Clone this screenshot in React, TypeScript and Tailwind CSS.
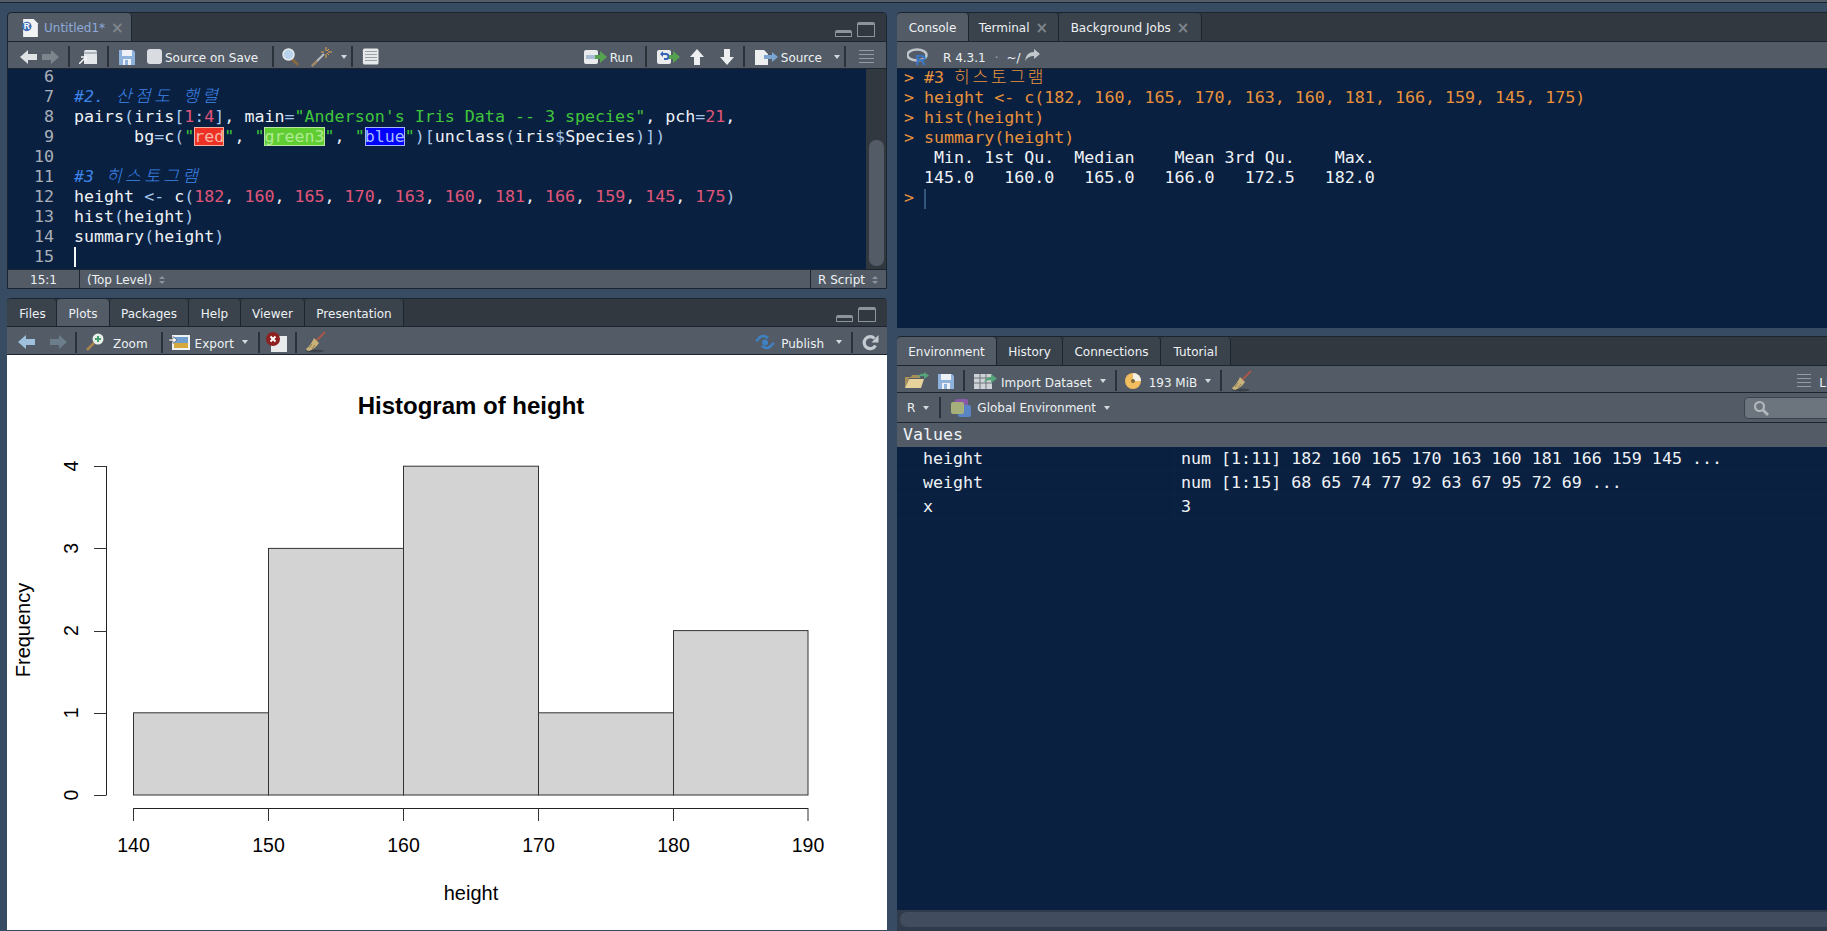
import type { ReactNode } from 'react'

const ui = "font-['DejaVu_Sans','Noto_Sans',sans-serif] text-[12px] text-[#eef1f4] whitespace-nowrap"
const mono = "font-['DejaVu_Sans_Mono','Noto_Sans_CJK_KR',monospace] text-[16.65px] leading-[20px] whitespace-pre [&>div]:h-[20px]"

// toolbar separator
function Sep({ className = '' }: { className?: string }) {
  return <div className={`w-[2px] h-[21px] shrink-0 bg-[#2b3138] ${className}`} />
}

function Caret({ className = '' }: { className?: string }) {
  return <div className={`w-0 h-0 shrink-0 border-x-[3.5px] border-x-transparent border-t-[4px] border-t-[#d5d9dd] ${className}`} />
}

function Arrow({ dir, color, className = '' }: { dir: 'l' | 'r' | 'u' | 'd'; color: string; className?: string }) {
  const pts = {
    l: '0,8 8,1 8,5 17,5 17,11 8,11 8,15',
    r: '17,8 9,1 9,5 0,5 0,11 9,11 9,15',
    u: '8,0 15,8 11,8 11,16 5,16 5,8 1,8',
    d: '8,16 15,8 11,8 11,0 5,0 5,8 1,8',
  }[dir]
  return (
    <svg width="17" height="16" viewBox="0 0 17 16" className={`shrink-0 ${className}`}>
      <polygon points={pts} fill={color} />
    </svg>
  )
}

function WindowButtons({ className = '' }: { className?: string }) {
  return (
    <div className={`flex items-end gap-[5px] ${className}`}>
      <div className="w-[17px] h-[7px] rounded-t-[2px] border border-[#8b939b] border-t-[3px] bg-[#32383f]" />
      <div className="w-[18px] h-[15px] rounded-t-[2px] border border-[#8b939b] border-t-[3px]" />
    </div>
  )
}

function Floppy({ className = '' }: { className?: string }) {
  return (
    <svg width="16" height="16" viewBox="0 0 16 16" className={`shrink-0 ${className}`}>
      <path d="M0 1h14l2 2v13H0z" fill="#8fb2dc" />
      <rect x="3" y="1" width="10" height="6" fill="#eef2f6" />
      <rect x="4" y="10" width="8" height="6" fill="#eef2f6" />
      <rect x="6" y="11" width="3" height="5" fill="#8fb2dc" />
    </svg>
  )
}

function Broom({ className = '' }: { className?: string }) {
  return (
    <svg width="21" height="22" viewBox="0 0 21 22" className={`shrink-0 ${className}`}>
      <ellipse cx="10" cy="20" rx="9" ry="1.5" fill="#3b4249" />
      <line x1="20" y1="1" x2="11" y2="10" stroke="#a8574a" strokeWidth="2" />
      <path d="M9 7 L14 12 Q10 18 4 20 Q2 20 1 18 Q6 14 9 7z" fill="#c9b27a" />
      <path d="M7 13l-3 4M10 14l-3 4" stroke="#8f7d4e" strokeWidth="1" />
    </svg>
  )
}

function Magnifier({ className = '' }: { className?: string }) {
  return (
    <svg width="17" height="18" viewBox="0 0 17 18" className={`shrink-0 ${className}`}>
      <line x1="10" y1="11" x2="16" y2="17" stroke="#8a6a3c" strokeWidth="2.5" />
      <circle cx="6.5" cy="6.5" r="5.5" fill="#b7d2ea" stroke="#e6eaee" strokeWidth="1.5" />
    </svg>
  )
}

function Wand({ className = '' }: { className?: string }) {
  return (
    <svg width="22" height="20" viewBox="0 0 22 20" className={`shrink-0 ${className}`}>
      <line x1="1" y1="19" x2="13" y2="7" stroke="#b8bdc2" strokeWidth="2" />
      <line x1="1" y1="19" x2="6" y2="14" stroke="#a5835a" strokeWidth="2" />
      <path d="M15 0v4M15 7v4M10 5h3M17 5h4M18 2l-2 2M18 8l-2-2" stroke="#e8a24a" strokeWidth="1" />
    </svg>
  )
}

function Notebook({ className = '' }: { className?: string }) {
  return (
    <svg width="17" height="17" viewBox="0 0 17 17" className={`shrink-0 ${className}`}>
      <rect x="1" y="0.5" width="15.5" height="16" rx="1.5" fill="#e6e8ea" />
      <path d="M3 3.5h12M3 6.5h12M3 9.5h12M3 12.5h12" stroke="#9aa2a9" strokeWidth="1" />
      <path d="M0.5 2v14" stroke="#777f87" strokeWidth="1" strokeDasharray="1 1" />
    </svg>
  )
}

function RunIcon({ className = '' }: { className?: string }) {
  return (
    <svg width="23" height="16" viewBox="0 0 23 16" className={`shrink-0 ${className}`}>
      <rect x="0" y="1" width="14" height="14" rx="2" fill="#e9ebed" />
      <rect x="2" y="6" width="9" height="4" fill="#a9bcd4" />
      <polygon points="23,8 16,2 16,6 11,6 11,10 16,10 16,14" fill="#55a34f" />
    </svg>
  )
}

function RerunIcon({ className = '' }: { className?: string }) {
  return (
    <svg width="23" height="16" viewBox="0 0 23 16" className={`shrink-0 ${className}`}>
      <rect x="0" y="1" width="14" height="14" rx="2" fill="#e9ebed" />
      <path d="M3 5l3-3v2h3a2.500 2.500 0 0 1 0 7H7V9h2a1 1 0 0 0 0-3H6v2z" fill="#3560b8" />
      <polygon points="23,8 16,2 16,6 12,6 12,10 16,10 16,14" fill="#55a34f" />
    </svg>
  )
}

function SourceIcon({ className = '' }: { className?: string }) {
  return (
    <svg width="23" height="16" viewBox="0 0 23 16" className={`shrink-0 ${className}`}>
      <path d="M0 1h9l4 4v11H0z" fill="#eceef0" />
      <polygon points="23,8 17,3 17,6 9,6 9,10 17,10 17,13" fill="#7ba4d0" />
    </svg>
  )
}

function Lines({ className = '', n = 4 }: { className?: string; n?: number }) {
  return (
    <div className={`flex flex-col gap-[3px] ${className}`}>
      {Array.from({ length: n }).map((_, i) => (
        <div key={i} className="h-[1px] bg-[#949ba2]" />
      ))}
    </div>
  )
}

function Tab({ active, className, children }: { active?: boolean; className: string; children: ReactNode }) {
  return (
    <div
      className={`${ui} ${className} shrink-0 h-full flex items-center justify-center gap-[6px] pt-[2px] rounded-t-[4px] border-r border-[#1b2530] ${
        active ? 'bg-[#535c66] -mb-[1px] relative z-10' : 'bg-[#3a434c]'
      }`}
    >
      {children}
    </div>
  )
}

function TabX() {
  return <span className="text-[#7f868d] text-[15px] leading-none font-bold">×</span>
}

function TabBar({ h, children, right }: { h: string; children: ReactNode; right?: ReactNode }) {
  return (
    <div className={`${h} shrink-0 flex bg-[#32383f] border-b border-[#1b2530]`}>
      {children}
      {right}
    </div>
  )
}

function Toolbar({ h, shift = '[&>span]:translate-y-[1px]', children }: { h: string; shift?: string; children: ReactNode }) {
  return (
    <div className={`${h} shrink-0 flex items-center pt-[3px] bg-[#535c66] border-b border-[#1b2530] ${shift} ${ui}`}>
      {children}
    </div>
  )
}

function SourceTabs() {
  return (
    <TabBar h="h-[29px]" right={<WindowButtons className="ml-auto mr-[11px] mb-[4px]" />}>
      <Tab active className="w-[124px] pl-[14px] justify-start!">
        <svg width="17" height="19" viewBox="0 0 16 18" className="shrink-0">
          <path d="M1 0h10l4 4v13H1z" fill="#f2f3f4" />
          <circle cx="4.500" cy="7" r="4.500" fill="#3c6fb4" />
          <text x="4.500" y="9.800" textAnchor="middle" fontSize="8" fontWeight="bold" fill="#fff" fontFamily="Liberation Sans">R</text>
        </svg>
        <span className="text-[#8fa9da] -ml-[1px]">Untitled1*</span>
        <TabX />
      </Tab>
    </TabBar>
  )
}

function SourceToolbar() {
  return (
    <Toolbar h="h-[27px]">
      <Arrow dir="l" color="#dfe3e6" className="ml-[12px]" />
      <Arrow dir="r" color="#7d858c" className="ml-[5px]" />
      <Sep className="ml-[9px]" />
      <svg width="19" height="15" viewBox="0 0 19 15" className="ml-[9px] shrink-0">
        <path d="M5 3q0-2 2-2h9q2 0 2 2v12H5z" fill="#e4e7ea" />
        <path d="M5 4h13" stroke="#aeb6bd" strokeWidth="2" />
        <path d="M0 15l6-6M2 8h5v5" stroke="#f4f5f6" strokeWidth="1.500" fill="none" />
      </svg>
      <Sep className="ml-[9px]" />
      <Floppy className="ml-[10px]" />
      <div className="ml-[12px] w-[15px] h-[15px] rounded-[3px] bg-[#d9dde1] shrink-0" />
      <span className="ml-[3px]">Source on Save</span>
      <Sep className="ml-[14px]" />
      <Magnifier className="ml-[8px]" />
      <Wand className="ml-[12px]" />
      <Caret className="ml-[8px]" />
      <Sep className="ml-[4px]" />
      <Notebook className="ml-[9px]" />

      <RunIcon className="ml-auto" />
      <span className="ml-[3px]">Run</span>
      <Sep className="ml-[12px]" />
      <RerunIcon className="ml-[10px]" />
      <Arrow dir="u" color="#eceef0" className="ml-[9px]" />
      <Arrow dir="d" color="#eceef0" className="ml-[13px]" />
      <Sep className="ml-[7px]" />
      <SourceIcon className="ml-[10px]" />
      <span className="ml-[3px]">Source</span>
      <Caret className="ml-[12px]" />
      <Sep className="ml-[4px]" />
      <Lines className="ml-[13px] mr-[12px] w-[15px]" />
    </Toolbar>
  )
}

const Num = ({ children }: { children: ReactNode }) => <span className="text-[#e0567a]">{children}</span>
const Op = ({ children }: { children: ReactNode }) => <span className="text-[#a5c6ea]">{children}</span>
const Str = ({ children }: { children: ReactNode }) => <span className="text-[#40c63a]">{children}</span>
const Kor = ({ children, className = '' }: { children: string; className?: string }) => (
  <span className={`font-['Noto_Sans_CJK_KR',sans-serif] font-light text-[17px] leading-[0] tracking-[3.4px] ${className}`}>{children}</span>
)

const heights = [182, 160, 165, 170, 163, 160, 181, 166, 159, 145, 175]

function CodeLines() {
  return (
    <>
      <div>{' '}</div>
      <div className="italic text-[#3d85ea]">
        #2. <Kor className="ml-[2px]">산점도</Kor> <Kor>행렬</Kor>
      </div>
      <div>
        pairs<Op>(</Op>iris<Op>[</Op><Num>1</Num><Op>:</Op><Num>4</Num><Op>]</Op>, main<Op>=</Op>
        <Str>"Anderson's Iris Data -- 3 species"</Str>, pch<Op>=</Op><Num>21</Num>,
      </div>
      <div>
        {'      bg'}<Op>=</Op>c<Op>(</Op><Str>"</Str>
        <span className="bg-[#ee3124] text-[#f7b7a8] outline outline-1 -outline-offset-1 outline-[#f3b0a0]">red</span>
        <Str>"</Str>, <Str>"</Str>
        <span className="bg-[#60cd32] text-[#b0eb92] outline outline-1 -outline-offset-1 outline-[#b8e8a0]">green3</span>
        <Str>"</Str>, <Str>"</Str>
        <span className="bg-[#0000ff] text-[#a8bcff] outline outline-1 -outline-offset-1 outline-[#a8b4f8]">blue</span>
        <Str>"</Str><Op>)[</Op>unclass<Op>(</Op>iris<Op>$</Op>Species<Op>)])</Op>
      </div>
      <div>{' '}</div>
      <div className="italic text-[#3d85ea]">
        #3 <Kor className="ml-[2px]">히스토그램</Kor>
      </div>
      <div>
        height <Op>&lt;-</Op> c<Op>(</Op>
        {heights.map((h, i) => (
          <span key={i}>
            <Num>{h}</Num>
            {i < heights.length - 1 ? ', ' : ''}
          </span>
        ))}
        <Op>)</Op>
      </div>
      <div>hist<Op>(</Op>height<Op>)</Op></div>
      <div>summary<Op>(</Op>height<Op>)</Op></div>
      <div className="relative">
        {' '}
        <div className="absolute left-0 top-0 w-[2px] h-[20px] bg-[#f4f6f8]" />
      </div>
    </>
  )
}

function Editor() {
  return (
    <div className="h-[200px] shrink-0 flex bg-[#0a2040] overflow-hidden">
      <div className={`${mono} w-[46px] shrink-0 text-right text-[#a9b0b9] -mt-[2px]`}>
        {[6, 7, 8, 9, 10, 11, 12, 13, 14, 15].map((n) => (
          <div key={n}>{n}</div>
        ))}
      </div>
      <div className={`${mono} ml-[20px] flex-1 min-w-0 text-[#eef2f6] -mt-[2px]`}>
        <CodeLines />
      </div>
      <div className="w-[20px] shrink-0 bg-[#32383f] flex flex-col pt-[71px] pb-[3px] pl-[3px] pr-[2px]">
        <div className="flex-1 rounded-[7px] bg-[#535c66]" />
      </div>
    </div>
  )
}

function Updown({ className = '' }: { className?: string }) {
  return (
    <div className={`flex flex-col gap-[2px] ${className}`}>
      <div className="w-0 h-0 border-x-[3.5px] border-x-transparent border-b-[3px] border-b-[#8d949b]" />
      <div className="w-0 h-0 border-x-[3.5px] border-x-transparent border-t-[3px] border-t-[#8d949b]" />
    </div>
  )
}

function SourceStatus() {
  return (
    <div className={`h-[20px] shrink-0 flex items-center bg-[#535c66] border-t border-[#1b2530] ${ui}`}>
      <span className="w-[71px] text-center">15:1</span>
      <div className="w-[1px] h-full bg-[#1b2530]" />
      <span className="ml-[7px]">(Top Level)</span>
      <Updown className="ml-[7px]" />
      <div className="w-[1px] h-full bg-[#1b2530] ml-auto" />
      <span className="ml-[7px]">R Script</span>
      <Updown className="ml-[7px] mr-[8px]" />
    </div>
  )
}

function PlotsTabs() {
  return (
    <TabBar h="h-[28px]" right={<WindowButtons className="ml-auto mr-[11px] mb-[4px]" />}>
      <Tab className="w-[50px] pl-[2px]">Files</Tab>
      <Tab active className="w-[53px]">Plots</Tab>
      <Tab className="w-[79px]">Packages</Tab>
      <Tab className="w-[52px]">Help</Tab>
      <Tab className="w-[64px]">Viewer</Tab>
      <Tab className="w-[99px]">Presentation</Tab>
    </TabBar>
  )
}

function PlotsToolbar() {
  return (
    <Toolbar h="h-[28px]" shift="[&>span]:translate-y-[2px]">
      <Arrow dir="l" color="#9fc0da" className="ml-[11px]" />
      <Arrow dir="r" color="#6c7d8c" className="ml-[15px]" />
      <Sep className="ml-[8px]" />
      <svg width="18" height="18" viewBox="0 0 18 18" className="ml-[9px] shrink-0">
        <line x1="8" y1="10" x2="1" y2="17" stroke="#a98350" strokeWidth="2.500" />
        <circle cx="12" cy="6" r="5.500" fill="#e8efe9" />
        <path d="M12 3v6M9 6h6" stroke="#45a070" strokeWidth="2" />
      </svg>
      <span className="ml-[9px]">Zoom</span>
      <Sep className="ml-[13px]" />
      <svg width="21" height="17" viewBox="0 0 21 17" className="ml-[6px] shrink-0">
        <rect x="3" y="1" width="18" height="15" fill="#f1f2f3" />
        <rect x="5" y="3" width="14" height="6" fill="#6f9ecf" />
        <rect x="5" y="9" width="14" height="5" fill="#d6a93c" />
        <polygon points="8,6 4,2.500 4,5 0,5 0,7 4,7 4,9.500" fill="#f8f8f8" stroke="#333" strokeWidth="0.500" />
      </svg>
      <span className="ml-[5px]">Export</span>
      <Caret className="ml-[8px]" />
      <Sep className="ml-[10px]" />
      <svg width="21" height="20" viewBox="0 0 21 20" className="ml-[6px] shrink-0">
        <rect x="5" y="4" width="16" height="16" fill="#e8eaec" />
        <circle cx="7" cy="7" r="7" fill="#8e2020" />
        <path d="M4.500 4.500l5 5M9.500 4.500l-5 5" stroke="#fff" strokeWidth="2" />
      </svg>
      <Sep className="ml-[8px]" />
      <Broom className="ml-[8px]" />

      <svg width="20" height="17" viewBox="0 0 20 17" className="ml-auto shrink-0">
        <path d="M1 7q2-1 3-3 4-4 9 0M19 9q-2 1-3 3-4 4-9 0" stroke="#3f82c4" strokeWidth="2.500" fill="none" />
        <circle cx="10" cy="8.500" r="3" fill="#3f82c4" />
      </svg>
      <span className="ml-[6px]">Publish</span>
      <Caret className="ml-[12px]" />
      <Sep className="ml-[9px]" />
      <svg width="17" height="17" viewBox="0 0 17 17" className="ml-[9px] mr-[8px] shrink-0">
        <path d="M13.500 11.500a6 6 0 1 1 -1-7" stroke="#c5cad0" strokeWidth="3.200" fill="none" />
        <polygon points="16.500,1 16.500,8.500 9.500,8.500" fill="#c5cad0" />
      </svg>
    </Toolbar>
  )
}

const bars = [
  { x: 133.5, w: 135, n: 1 },
  { x: 268.5, w: 135, n: 3 },
  { x: 403.5, w: 135, n: 4 },
  { x: 538.5, w: 135, n: 1 },
  { x: 673.5, w: 134.5, n: 2 },
]

function Histogram() {
  const y0 = 795
  const unit = 82.2
  return (
    <svg width="879" height="574" className="block" fontFamily="Liberation Sans, sans-serif" fill="#000">
      <g transform="translate(-8 -355)">
        <text x="471" y="414" textAnchor="middle" fontSize="24" fontWeight="bold">Histogram of height</text>
        {bars.map((b) => (
          <rect key={b.x} x={b.x} y={y0 - b.n * unit} width={b.w} height={b.n * unit} fill="#d3d3d3" stroke="#333" strokeWidth="1" />
        ))}
        <path d="M106.500 466V795" stroke="#222" />
        {[0, 1, 2, 3, 4].map((n) => (
          <g key={n}>
            <line x1="94" x2="106.500" y1={Math.round(y0 - n * unit) + 0.5} y2={Math.round(y0 - n * unit) + 0.5} stroke="#333" />
            <text
              transform={`translate(78 ${y0 - n * unit}) rotate(-90)`}
              textAnchor="middle"
              fontSize="19.500"
            >
              {n}
            </text>
          </g>
        ))}
        <path d="M133.500 808.500H808" stroke="#222" />
        {[140, 150, 160, 170, 180, 190].map((t, i) => {
          const x = [133.5, 268.5, 403.5, 538.5, 673.5, 808][i]
          return (
            <g key={t}>
              <line x1={x} x2={x} y1="808" y2="821" stroke="#333" />
              <text x={x} y="852" textAnchor="middle" fontSize="19.500">{t}</text>
            </g>
          )
        })}
        <text x="471" y="900" textAnchor="middle" fontSize="20">height</text>
        <text transform="translate(30 630) rotate(-90)" textAnchor="middle" fontSize="20">Frequency</text>
      </g>
    </svg>
  )
}

function ConsoleTabs() {
  return (
    <TabBar h="h-[29px]">
      <Tab active className="w-[72px]">Console</Tab>
      <Tab className="w-[90px]">Terminal <TabX /></Tab>
      <Tab className="w-[143px]">Background Jobs <TabX /></Tab>
    </TabBar>
  )
}

function ConsoleToolbar() {
  return (
    <Toolbar h="h-[27px]">
      <svg width="21" height="17" viewBox="0 0 21 17" className="ml-[10px] shrink-0">
        <ellipse cx="10" cy="7" rx="9.500" ry="5.500" fill="none" stroke="#bfc5cb" strokeWidth="2.500" />
        <text x="14" y="16.500" textAnchor="middle" fontSize="15" fontWeight="bold" fill="#3a76c8" fontFamily="Liberation Sans">R</text>
      </svg>
      <span className="ml-[15px]">R 4.3.1</span>
      <span className="ml-[9px] text-[#a4abb2]">·</span>
      <span className="ml-[8px]">~/</span>
      <svg width="15" height="12" viewBox="0 0 15 12" className="ml-[4px] shrink-0 -mt-[3px]">
        <path d="M9 0l6 5-6 5V7Q3 7 0 12 1 3 9 3z" fill="#c2c7cc" />
      </svg>
    </Toolbar>
  )
}

const Prompt = ({ children }: { children: string }) => (
  <div className="text-[#e8923c]">{'> '}{children}</div>
)

function ConsoleBody() {
  return (
    <div className={`${mono} flex-1 bg-[#0a2040] overflow-hidden pl-[7px] pt-0 text-[#eef2f6]`}>
      <div className="text-[#e8923c] -mt-[1px]">
        {'> #3 '}
        <Kor className="tracking-[2.8px]!">히스토그램</Kor>
      </div>
      <Prompt>height &lt;- c(182, 160, 165, 170, 163, 160, 181, 166, 159, 145, 175)</Prompt>
      <Prompt>hist(height)</Prompt>
      <Prompt>summary(height)</Prompt>
      <div>{'   Min. 1st Qu.  Median    Mean 3rd Qu.    Max. '}</div>
      <div>{'  145.0   160.0   165.0   166.0   172.5   182.0 '}</div>
      <div className="text-[#e8923c] flex">
        {'> '}
        <div className="w-[2px] h-[20px] bg-[#35567c] mt-[1px]" />
      </div>
    </div>
  )
}

function EnvTabs() {
  return (
    <TabBar h="h-[29px]">
      <Tab active className="w-[100px]">Environment</Tab>
      <Tab className="w-[66px]">History</Tab>
      <Tab className="w-[98px]">Connections</Tab>
      <Tab className="w-[70px]">Tutorial</Tab>
    </TabBar>
  )
}

function EnvToolbars() {
  return (
    <>
      <Toolbar h="h-[27px]" shift="[&>span]:translate-y-[2px]">
        <svg width="24" height="17" viewBox="0 0 24 17" className="ml-[8px] shrink-0">
          <path d="M0 5h6l1-2h8v3H4L0 16z" fill="#a89058" />
          <path d="M4 7h15l-3 9H0z" fill="#e6d29a" />
          <path d="M12 5q3-4 7-3V0l5 3.500-5 3.500V4q-4 0-7 1z" fill="#56a578" />
        </svg>
        <Floppy className="ml-[9px]" />
        <Sep className="ml-[9px]" />
        <svg width="23" height="17" viewBox="0 0 23 17" className="ml-[9px] shrink-0">
          <rect x="0" y="2" width="18" height="15" fill="#cfd3d7" />
          <path d="M0 6h18M0 11h18M6 2v15M12 2v15" stroke="#6c747c" strokeWidth="1" />
          <path d="M10 10q2-5 7-5V2l6 4.500-6 4.500V8q-4 0-7 2z" fill="#56a578" />
        </svg>
        <span className="ml-[4px]">Import Dataset</span>
        <Caret className="ml-[8px]" />
        <Sep className="ml-[9px]" />
        <svg width="16" height="16" viewBox="0 0 16 16" className="ml-[8px] shrink-0">
          <circle cx="8" cy="8" r="8" fill="#f2bd5e" />
          <path d="M8 8V0a8 8 0 0 1 8 8z" fill="#f4f1e6" />
          <circle cx="8" cy="8" r="2" fill="#7c6a40" />
        </svg>
        <span className="ml-[8px]">193 MiB</span>
        <Caret className="ml-[8px]" />
        <Sep className="ml-[9px]" />
        <Broom className="ml-[9px]" />
        <Lines className="ml-[545px] w-[14px]" n={4} />
        <span className="ml-[8px]">List</span>
      </Toolbar>
      <div className={`h-[30px] shrink-0 flex items-center bg-[#535c66] border-b border-[#1b2530] ${ui}`}>
        <span className="ml-[10px]">R</span>
        <Caret className="ml-[8px]" />
        <Sep className="ml-[10px]" />
        <svg width="20" height="18" viewBox="0 0 20 18" className="ml-[10px] shrink-0">
          <rect x="4" y="0" width="13" height="12" rx="2" fill="#8a5aa8" />
          <rect x="7" y="6" width="13" height="12" rx="2" fill="#5a84c4" />
          <rect x="0" y="3" width="13" height="12" rx="2" fill="#a7b07a" />
        </svg>
        <span className="ml-[6px]">Global Environment</span>
        <Caret className="ml-[8px]" />
        <div className="ml-[634px] w-[120px] h-[22px] shrink-0 flex items-center rounded-[4px] bg-[#6c747d] border border-[#3a434c] pl-[8px]">
          <svg width="17" height="16" viewBox="0 0 17 16">
            <circle cx="6.500" cy="6.500" r="4.500" fill="none" stroke="#b2b7bc" strokeWidth="2.200" />
            <line x1="10" y1="10" x2="15" y2="15" stroke="#b2b7bc" strokeWidth="2.800" />
          </svg>
        </div>
      </div>
    </>
  )
}

const envRows = [
  { name: 'height', value: 'num [1:11] 182 160 165 170 163 160 181 166 159 145 ...' },
  { name: 'weight', value: 'num [1:15] 68 65 74 77 92 63 67 95 72 69 ...' },
  { name: 'x', value: '3' },
]

function EnvBody() {
  return (
    <div className="flex-1 min-h-0 flex flex-col bg-[#0a2040]">
      <div className={`${mono} h-[24px] shrink-0 flex items-center pl-[6px] bg-[#535c66] text-[#eef2f6]`}>Values</div>
      <div className={`flex-1 min-h-0 ${mono} text-[#eef2f6] [&>div]:h-[24px]!`}>
        {envRows.map((r) => (
          <div key={r.name} className="flex items-center border-b border-[#0c2343]">
            <span className="w-[277px] pl-[26px] shrink-0">{r.name}</span>
            <span className="pl-[6px] border-l border-[#0c2343] h-full flex items-center">{r.value}</span>
          </div>
        ))}
      </div>
      <div className="h-[21px] shrink-0 bg-[#2f3a4a] pt-[2px] pl-[3px]">
        <div className="h-[15px] rounded-[7px] bg-[#414d5e]" />
      </div>
    </div>
  )
}

export default function App() {
  return (
    <div className="w-[1827px] h-[931px] overflow-hidden flex flex-col bg-[#374b63]">
      <div className="h-[3px] shrink-0 bg-[#535c66] border-b border-[#1b2530]" />
      <div className="flex-1 min-h-0 flex pt-[9px] pl-[7px] gap-[10px]">
        {/* left column */}
        <div className="w-[880px] shrink-0 flex flex-col gap-[9px]">
          <div className="h-[277px] shrink-0 flex flex-col border border-[#1b2530] rounded-t-[4px] overflow-hidden">
            <SourceTabs />
            <SourceToolbar />
            <Editor />
            <SourceStatus />
          </div>
          <div className="flex-1 min-h-0 flex flex-col border-t border-[#1b2530] rounded-t-[4px] overflow-hidden mb-[1px]">
            <PlotsTabs />
            <PlotsToolbar />
            <div className="flex-1 min-h-0 bg-white pl-[1px]">
              <Histogram />
            </div>
          </div>
        </div>
        {/* right column */}
        <div className="w-[960px] shrink-0 flex flex-col gap-[8px]">
          <div className="h-[316px] shrink-0 flex flex-col border-t border-[#1b2530] rounded-t-[4px] overflow-hidden">
            <ConsoleTabs />
            <ConsoleToolbar />
            <ConsoleBody />
          </div>
          <div className="flex-1 min-h-0 flex flex-col border-t border-[#1b2530] rounded-t-[4px] overflow-hidden">
            <EnvTabs />
            <EnvToolbars />
            <EnvBody />
          </div>
        </div>
      </div>
    </div>
  )
}
